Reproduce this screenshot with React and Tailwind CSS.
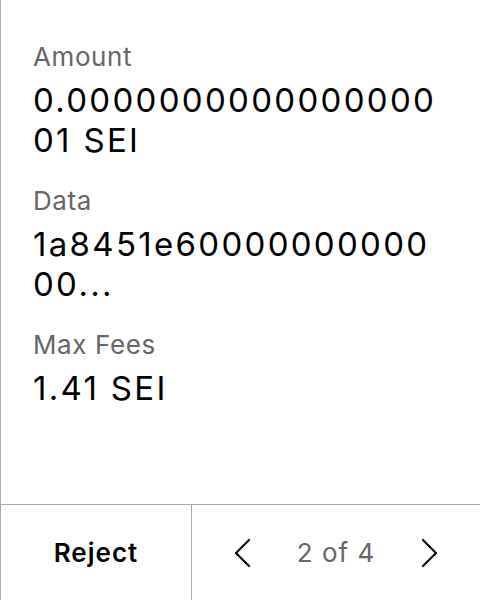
import React from 'react';

const fields = [
  { label: 'Amount', value: '0.000000000000000001 SEI' },
  { label: 'Data', value: '1a8451e6000000000000...' },
  { label: 'Max Fees', value: '1.41 SEI' },
];

function Chevron({ dir }) {
  return (
    <svg width="18" height="30" viewBox="0 0 18 30" fill="none">
      <path
        d={dir === 'left' ? 'M16 2 L3 15 L16 28' : 'M2 2 L15 15 L2 28'}
        stroke="#000"
        strokeWidth="2.2"
        strokeLinecap="round"
        strokeLinejoin="round"
      />
    </svg>
  );
}

export default function App() {
  return (
    <div
      className="w-[480px] h-[600px] bg-white border-l border-[#a8a8a8] flex flex-col overflow-hidden"
      style={{ fontFamily: 'Inter, "Noto Sans", sans-serif' }}
    >
      <div className="flex-1 pl-[32px] pr-[36px] pt-[41px]">
        {fields.map((f, i) => (
          <div key={f.label} className={i > 0 ? 'mt-[25px]' : ''}>
            <div className="text-[26px] leading-[32px] tracking-[0.6px] text-[#666666]">{f.label}</div>
            <div className="mt-[7px] text-[33px] leading-[40px] tracking-[2.3px] text-black break-all">
              {f.value}
            </div>
          </div>
        ))}
      </div>
      <div className="h-[96px] border-t border-[#a8a8a8] flex">
        <div className="w-[191px] border-r border-[#a8a8a8] flex items-center justify-center">
          <span className="text-[26px] font-semibold tracking-[1px] text-black">Reject</span>
        </div>
        <div className="flex-1 flex items-center justify-center gap-[46px]">
          <Chevron dir="left" />
          <span className="text-[26px] tracking-[1px] text-[#666666]">2 of 4</span>
          <Chevron dir="right" />
        </div>
      </div>
    </div>
  );
}
